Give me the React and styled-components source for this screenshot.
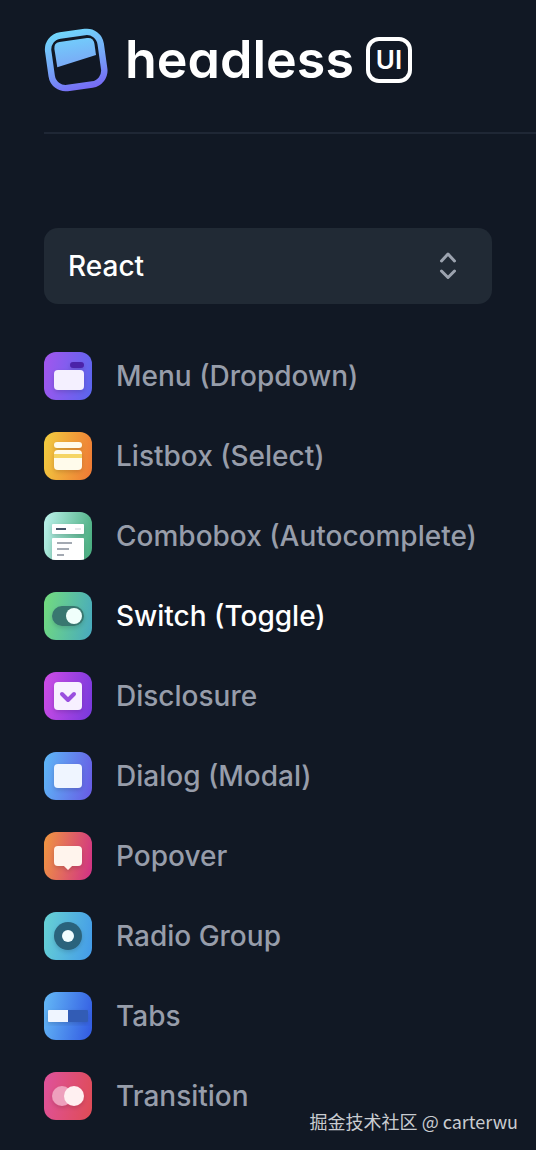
import React, { useState } from "react";
import styled, { createGlobalStyle } from "styled-components";

const GlobalStyle = createGlobalStyle`
  * {
    box-sizing: border-box;
  }
  body {
    margin: 0;
    background: #111824;
    font-family: Inter, sans-serif;
  }
`;

const Page = styled.div`
  position: relative;
  min-height: 100vh;
  padding: 28px 0 30px 44px;
`;
const Header = styled.header`
  padding-bottom: 40px;
  border-bottom: 2px solid #1f2735;
`;
const Brand = styled.a`
  display: flex;
  align-items: center;
  height: 64px;
  color: #fff;
  text-decoration: none;
`;
const BrandName = styled.span`
  margin-left: 16px;
  font-size: 52px;
  font-weight: 600;
  line-height: 64px;
  font-feature-settings: "cv11" 1;
`;
const BrandTag = styled.span`
  display: flex;
  align-items: center;
  justify-content: center;
  width: 46px;
  height: 46px;
  margin-left: 12px;
  border: 4px solid #fff;
  border-radius: 13px;
  font-size: 26px;
  font-weight: 600;
  line-height: 28px;
`;
const Sidebar = styled.div`
  padding: 94px 44px 0 0;
`;
const SelectBox = styled.div`
  display: grid;
  align-items: center;
  > * {
    grid-area: 1 / 1;
  }
  svg {
    justify-self: end;
    margin-right: 34px;
    pointer-events: none;
  }
`;
const FrameworkSelect = styled.select`
  appearance: none;
  width: 100%;
  height: 76px;
  padding: 0 24px;
  border: 0;
  border-radius: 14px;
  background: #212a35;
  color: #fff;
  font-family: inherit;
  font-size: 28px;
  font-weight: 500;
`;
const NavList = styled.ul`
  display: flex;
  flex-direction: column;
  gap: 32px;
  margin: 48px 0 0;
  padding: 0;
  list-style: none;
`;
const NavLink = styled.a`
  display: flex;
  align-items: center;
  gap: 24px;
  color: ${(props) => (props.$active ? "#fff" : "#979daa")};
  font-size: 28px;
  font-weight: 500;
  line-height: 48px;
  white-space: nowrap;
  text-decoration: none;
  svg {
    flex: none;
  }
`;
const Credit = styled.div`
  position: absolute;
  right: 18px;
  bottom: 15px;
  color: #c9ccd1;
  font-family: "Noto Sans CJK SC", sans-serif;
  font-size: 18px;
  line-height: 28px;
`;

const LogoMark = () => (
  <svg width="65" height="64" viewBox="0 0 65 64" fill="none" aria-hidden="true">
    <defs>
      <linearGradient id="logo" x1="26" y1="0" x2="36" y2="64" gradientUnits="userSpaceOnUse">
        <stop stopColor="#70d8fb" />
        <stop offset="0.5" stopColor="#76a9f8" />
        <stop offset="1" stopColor="#7668f5" />
      </linearGradient>
      <linearGradient id="logoInner" x1="28" y1="10" x2="33" y2="40" gradientUnits="userSpaceOnUse">
        <stop stopColor="#72cdfb" />
        <stop offset="1" stopColor="#7ba5f5" />
      </linearGradient>
    </defs>
    <rect
      x="5.7"
      y="5.5"
      width="53"
      height="53"
      rx="14"
      transform="rotate(-8 32.2 32)"
      stroke="url(#logo)"
      strokeWidth="6.4"
    />
    <path
      d="M13.3 39.3 10.4 21Q9.6 15 15.5 14L43 10Q49.4 9.2 50.4 15.5L52 27Z"
      fill="url(#logoInner)"
    />
  </svg>
);

const Selector = () => (
  <svg width="20" height="32" viewBox="0 0 20 32" fill="none" aria-hidden="true">
    <path
      d="m3.5 11 6.5-7 6.5 7M3.5 21l6.5 6.5 6.5-6.5"
      stroke="#9ca3af"
      strokeWidth="3"
      strokeLinecap="round"
      strokeLinejoin="round"
    />
  </svg>
);

const items = [
  {
    name: "Menu (Dropdown)",
    colors: ["#9f57ee", "#5d65ee"],
    art: (
      <>
        <rect x="26" y="10" width="14" height="6" rx="3" fill="#4b21a8" />
        <rect x="10" y="18" width="30" height="20" rx="4" fill="#f4f0ff" />
      </>
    ),
  },
  {
    name: "Listbox (Select)",
    colors: ["#f2c83f", "#ef7d35"],
    art: (
      <>
        <rect x="10" y="10" width="28" height="6" rx="3" fill="#fffbeb" />
        <rect x="10" y="18" width="28" height="20" rx="4" fill="#fffbeb" />
        <rect x="10" y="22" width="28" height="4" fill="#f5d565" />
      </>
    ),
  },
  {
    name: "Combobox (Autocomplete)",
    colors: ["#b5eee5", "#4caf82"],
    art: (
      <>
        <rect x="8" y="12" width="32" height="10" rx="1" fill="#fff" />
        <path d="M8 27q0-1 1-1h30q1 0 1 1v21H8z" fill="#fff" />
        <path d="M12 17h10" stroke="#475569" strokeWidth="2" />
        <path d="M31 17h6" stroke="#e5e7eb" strokeWidth="2" />
        <path d="M13 31h15M13 37h12M13 43h7" stroke="#a3a9b2" strokeWidth="2" />
      </>
    ),
  },
  {
    name: "Switch (Toggle)",
    colors: ["#70d981", "#4aacbc"],
    art: (
      <>
        <rect x="8" y="14" width="32" height="20" rx="10" fill="#38776f" />
        <circle cx="30" cy="24" r="8" fill="#f0fffb" />
      </>
    ),
  },
  {
    name: "Disclosure",
    colors: ["#c94be5", "#7c3add"],
    art: (
      <>
        <rect x="10" y="10" width="28" height="28" rx="4" fill="#f7f0ff" />
        <path
          d="m18 22 6 6 6-6"
          fill="none"
          stroke="#9a50df"
          strokeWidth="4"
          strokeLinecap="round"
          strokeLinejoin="round"
        />
      </>
    ),
  },
  {
    name: "Dialog (Modal)",
    colors: ["#5eb2f6", "#675fe5"],
    art: <rect x="10" y="12" width="28" height="24" rx="4" fill="#eff5ff" />,
  },
  {
    name: "Popover",
    colors: ["#ee9144", "#d23682"],
    art: (
      <path
        d="M14 14h20q4 0 4 4v12q0 4-4 4h-6l-4 4-4-4h-6q-4 0-4-4V18q0-4 4-4z"
        fill="#fff4ed"
      />
    ),
  },
  {
    name: "Radio Group",
    colors: ["#65cfd5", "#459de8"],
    art: (
      <>
        <circle cx="24" cy="24" r="14" fill="#2b637c" />
        <circle cx="24" cy="24" r="6" fill="#effcff" />
      </>
    ),
  },
  {
    name: "Tabs",
    colors: ["#61b3f5", "#345ee3"],
    art: (
      <>
        <path d="M24 18h19q1 0 1 1v10q0 1-1 1H24z" fill="#315bb5" />
        <path d="M24 18H5q-1 0-1 1v10q0 1 1 1h19z" fill="#eff5ff" />
      </>
    ),
  },
  {
    name: "Transition",
    colors: ["#df5298", "#df4c59"],
    art: (
      <>
        <circle cx="18" cy="24" r="10" fill="#eea0bd" />
        <circle cx="30" cy="24" r="10" fill="#fff0f1" />
      </>
    ),
  },
];

const ItemIcon = ({ id, colors, children }) => (
  <svg width="48" height="48" viewBox="0 0 48 48" aria-hidden="true">
    <defs>
      <linearGradient id={id} x1="0" y1="0.4" x2="1" y2="0.6">
        <stop stopColor={colors[0]} />
        <stop offset="1" stopColor={colors[1]} />
      </linearGradient>
      <clipPath id={`${id}-clip`}>
        <rect width="48" height="48" rx="12" />
      </clipPath>
      <filter id={`${id}-shadow`} x="-20%" y="-20%" width="140%" height="150%">
        <feDropShadow dx="0" dy="2" stdDeviation="2" floodOpacity="0.15" />
      </filter>
    </defs>
    <g clipPath={`url(#${id}-clip)`}>
      <rect width="48" height="48" fill={`url(#${id})`} />
      <g filter={`url(#${id}-shadow)`}>{children}</g>
    </g>
  </svg>
);

export default function App() {
  const [framework, setFramework] = useState("React");
  const [active, setActive] = useState("Switch (Toggle)");

  return (
    <>
      <GlobalStyle />
      <Page>
        <Header>
          <Brand href="#">
            <LogoMark />
            <BrandName>headless</BrandName>
            <BrandTag>UI</BrandTag>
          </Brand>
        </Header>
        <Sidebar>
          <SelectBox>
            <FrameworkSelect
              aria-label="Framework"
              value={framework}
              onChange={(e) => setFramework(e.target.value)}
            >
              <option>React</option>
              <option>Vue</option>
            </FrameworkSelect>
            <Selector />
          </SelectBox>
          <nav>
            <NavList>
              {items.map((item, index) => (
                <li key={item.name}>
                  <NavLink
                    href="#"
                    $active={item.name === active}
                    onClick={() => setActive(item.name)}
                  >
                    <ItemIcon id={`item-${index}`} colors={item.colors}>
                      {item.art}
                    </ItemIcon>
                    {item.name}
                  </NavLink>
                </li>
              ))}
            </NavList>
          </nav>
        </Sidebar>
        <Credit>掘金技术社区 @ carterwu</Credit>
      </Page>
    </>
  );
}
